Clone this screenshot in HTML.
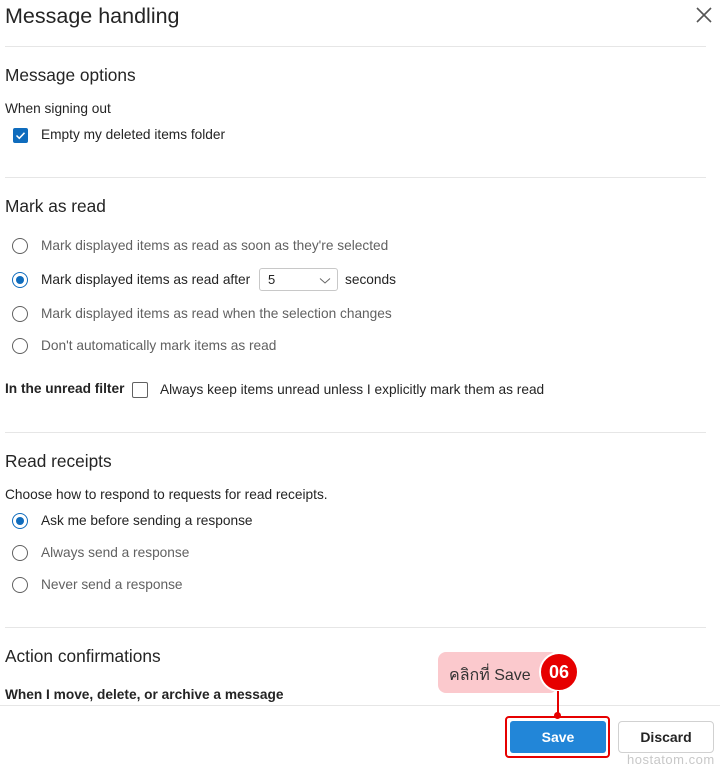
<!DOCTYPE html>
<html><head><meta charset="utf-8"><style>
body{margin:0;width:720px;height:769px;background:#fff;font-family:"Segoe UI","Liberation Sans","Noto Sans CJK SC",sans-serif;color:#242424;position:relative;overflow:hidden}
.a{position:absolute;white-space:nowrap}
.h1{font-size:21.5px;left:5px;top:4px}
.h2{font-size:17.3px;left:5px}
.t{font-size:13.7px}
.g{color:#616161}
.hr{position:absolute;left:5px;width:701px;height:1px;background:#e6e6e6}
.r{position:absolute;left:12px;width:16px;height:16px;border:1px solid #616161;border-radius:50%;box-sizing:border-box}
.r.on{border-color:#0f6cbd}
.r.on:after{content:"";position:absolute;left:3px;top:3px;width:8px;height:8px;border-radius:50%;background:#0f6cbd}
</style></head><body>
<div class="a h1">Message handling</div>
<svg class="a" style="left:695px;top:6px" width="18" height="18"><path d="M2 2L16 16M16 2L2 16" stroke="#555" stroke-width="1.6"/></svg>
<div class="hr" style="top:46px"></div>
<div class="a h2" style="top:65px">Message options</div>
<div class="a t" style="left:5px;top:101px">When signing out</div>
<div class="a" style="left:13px;top:128px;width:15px;height:15px;background:#0f6cbd;border-radius:2px"><svg width="15" height="15"><path d="M3.5 7.5L6.3 10.3L11.5 4.8" stroke="#fff" stroke-width="1.5" fill="none"/></svg></div>
<div class="a t" style="left:41px;top:127px">Empty my deleted items folder</div>
<div class="hr" style="top:177px"></div>
<div class="a h2" style="top:196px">Mark as read</div>
<div class="r" style="top:238px"></div><div class="a t g" style="left:41px;top:238px">Mark displayed items as read as soon as they're selected</div>
<div class="r on" style="top:272px"></div><div class="a t" style="left:41px;top:272px">Mark displayed items as read after</div>
<div class="a" style="left:259px;top:268px;width:79px;height:23px;border:1px solid #c8c8c8;border-radius:3px;box-sizing:border-box"><span class="a" style="left:8px;top:3px;font-size:13px">5</span><svg class="a" style="left:59px;top:8px" width="12" height="8"><path d="M1 1.5L6 6L11 1.5" stroke="#666" fill="none"/></svg></div>
<div class="a t" style="left:345px;top:272px">seconds</div>
<div class="r" style="top:306px"></div><div class="a t g" style="left:41px;top:306px">Mark displayed items as read when the selection changes</div>
<div class="r" style="top:338px"></div><div class="a t g" style="left:41px;top:338px">Don't automatically mark items as read</div>
<div class="a t" style="left:5px;top:381px;font-weight:bold">In the unread filter</div>
<div class="a" style="left:132px;top:382px;width:16px;height:16px;border:1px solid #616161;border-radius:2px;box-sizing:border-box"></div>
<div class="a t" style="left:160px;top:382px">Always keep items unread unless I explicitly mark them as read</div>
<div class="hr" style="top:432px"></div>
<div class="a h2" style="top:451px">Read receipts</div>
<div class="a t" style="left:5px;top:487px">Choose how to respond to requests for read receipts.</div>
<div class="r on" style="top:513px"></div><div class="a t" style="left:41px;top:513px">Ask me before sending a response</div>
<div class="r" style="top:545px"></div><div class="a t g" style="left:41px;top:545px">Always send a response</div>
<div class="r" style="top:577px"></div><div class="a t g" style="left:41px;top:577px">Never send a response</div>
<div class="hr" style="top:627px"></div>
<div class="a h2" style="top:646px">Action confirmations</div>
<div class="a t" style="left:5px;top:687px;font-weight:bold">When I move, delete, or archive a message</div>
<div class="a" style="left:0;top:705px;width:720px;height:1px;background:#e6e6e6"></div>
<div class="a" style="left:438px;top:652px;width:120px;height:41px;background:#fbc9cd;border-radius:8px"></div>
<div class="a" style="left:449px;top:663px;font-size:16px;color:#333">คลิกที่ Save</div>
<div class="a" style="left:539px;top:652px;width:40px;height:40px;border-radius:50%;background:#e60000;border:2px solid #fff;box-sizing:border-box;color:#fff;font-weight:bold;font-size:18px;text-align:center;line-height:36px">06</div>
<div class="a" style="left:557px;top:691px;width:2px;height:25px;background:#e60000"></div>
<div class="a" style="left:554px;top:712px;width:7px;height:7px;border-radius:50%;background:#e60000"></div>
<div class="a" style="left:505px;top:716px;width:105px;height:42px;border:2px solid #e60000;border-radius:4px;box-sizing:border-box"></div>
<div class="a" style="left:510px;top:721px;width:96px;height:32px;background:#2286d8;border-radius:3px;color:#fff;font-weight:bold;font-size:14px;text-align:center;line-height:32px">Save</div>
<div class="a" style="left:618px;top:721px;width:96px;height:32px;border:1px solid #d1d1d1;border-radius:4px;box-sizing:border-box;font-weight:bold;font-size:14px;text-align:center;line-height:30px">Discard</div>
<div class="a" style="left:627px;top:752px;font-size:13px;color:#c8c8c8;letter-spacing:0.5px">hostatom.com</div>
</body></html>
